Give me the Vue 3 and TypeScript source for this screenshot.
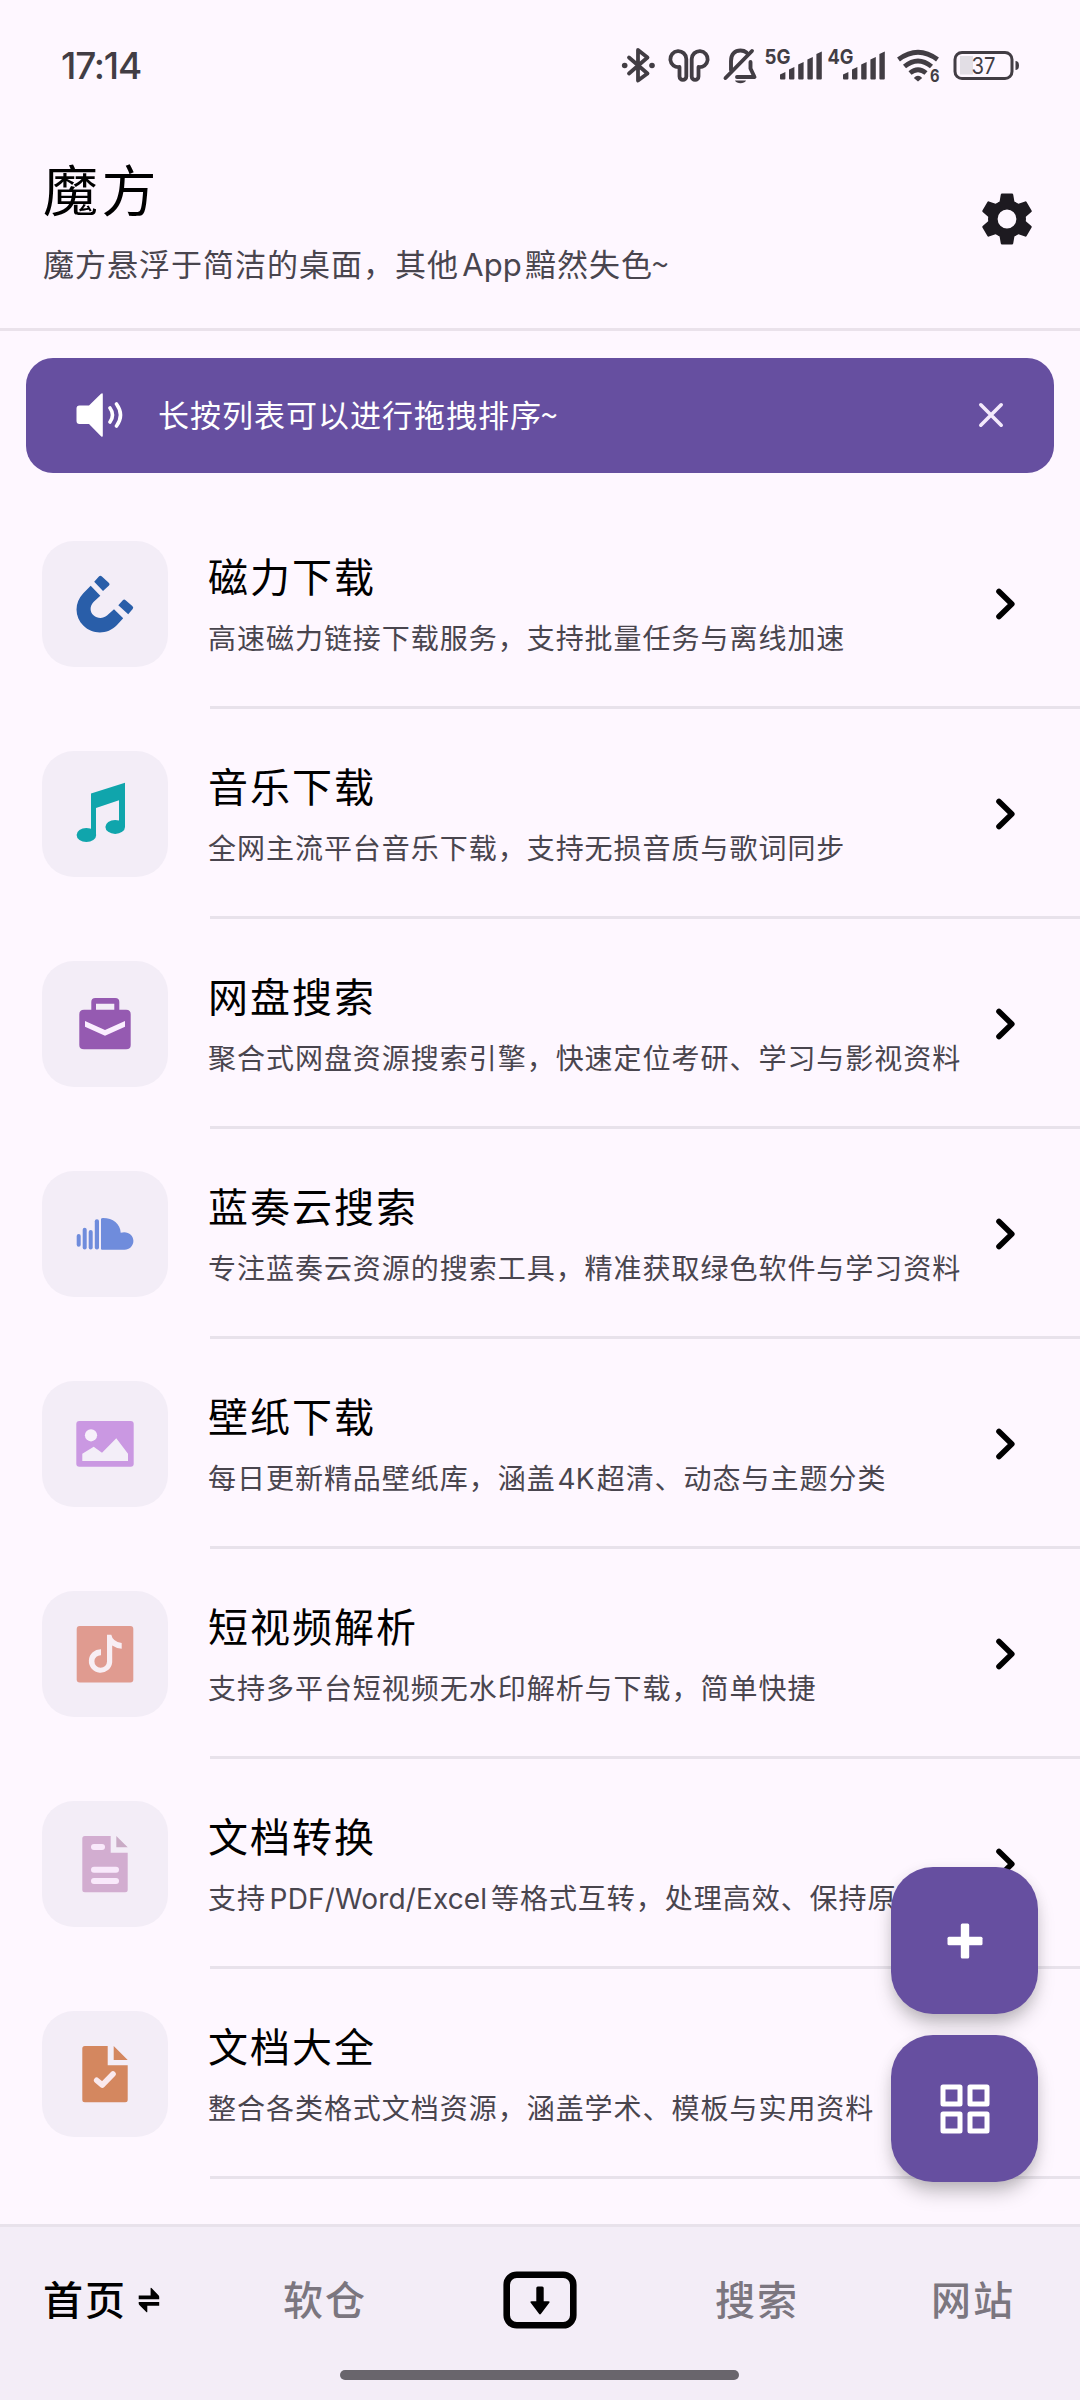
<script setup lang="ts">
interface Tool {
  icon: string
  title: string
  desc: string
}

interface Segment {
  text: string
  latin: boolean
}

const tools: Tool[] = [
  { icon: 'magnet', title: '磁力下载', desc: '高速磁力链接下载服务，支持批量任务与离线加速' },
  { icon: 'music', title: '音乐下载', desc: '全网主流平台音乐下载，支持无损音质与歌词同步' },
  { icon: 'case', title: '网盘搜索', desc: '聚合式网盘资源搜索引擎，快速定位考研、学习与影视资料' },
  { icon: 'cloud', title: '蓝奏云搜索', desc: '专注蓝奏云资源的搜索工具，精准获取绿色软件与学习资料' },
  { icon: 'image', title: '壁纸下载', desc: '每日更新精品壁纸库，涵盖4K超清、动态与主题分类' },
  { icon: 'video', title: '短视频解析', desc: '支持多平台短视频无水印解析与下载，简单快捷' },
  { icon: 'convert', title: '文档转换', desc: '支持PDF/Word/Excel等格式互转，处理高效、保持原' },
  { icon: 'docs', title: '文档大全', desc: '整合各类格式文档资源，涵盖学术、模板与实用资料' },
]

const teeth = [0, 60, 120, 180, 240, 300]
const bars = [
  { x: 0, h: 6.5 },
  { x: 9, h: 11.5 },
  { x: 18.2, h: 16.5 },
  { x: 27.4, h: 21.5 },
  { x: 36.4, h: 27 },
]

function segments(text: string): Segment[] {
  return text
    .split(/([A-Za-z0-9/]+)/)
    .filter(Boolean)
    .map((part) => ({ text: part, latin: /^[A-Za-z0-9/]+$/.test(part) }))
}
</script>

<template>
  <div class="screen">
    <div class="status">
      <span class="time">17:14</span>
      <svg class="status-icons" width="400" height="44" viewBox="620 44 400 44" fill="none" stroke="#423d44" stroke-width="4" stroke-linecap="round" stroke-linejoin="round">
        <path d="M629 57.500L647.500 73.500L638 80.500V50L647.500 57.500L629 73.500" stroke-width="3.800" />
        <g fill="#423d44" stroke="none">
          <circle cx="624.700" cy="65.500" r="2.800" />
          <circle cx="652" cy="65.500" r="2.800" />
        </g>
        <path d="M679.500 67A8 8 0 1 1 686.300 59V76.500A3.400 3.400 0 0 1 679.500 76.500ZM698.500 67A8 8 0 1 0 691.700 59V76.500A3.400 3.400 0 0 0 698.500 76.500Z" stroke-width="3.800" />
        <path d="M731 70V61C731 54 735 50.500 740.500 50.500C743 50.500 745 51.200 746.500 52.500M750.500 62V68.500L754.500 77H737M752 51L725.500 78" stroke-width="3.900" />
        <path d="M735 80.500H746C744.500 84 736.500 84 735 80.500Z" fill="#423d44" stroke="none" />
        <g fill="#423d44" stroke="none">
          <g v-for="offset in [780, 843]" :key="offset">
            <path
              v-for="bar in bars"
              :key="bar.x"
              :d="`M${offset + bar.x} ${81 - bar.h}L${offset + bar.x + 5.400} ${78.500 - bar.h}V78.500Q${offset + bar.x + 5.400} 79.500 ${offset + bar.x + 4.400} 79.500H${offset + bar.x + 1}Q${offset + bar.x} 79.500 ${offset + bar.x} 78.500Z`"
            />
          </g>
          <text x="764.500" y="64" class="net" textLength="26" lengthAdjust="spacingAndGlyphs">5G</text>
          <text x="827.500" y="64" class="net" textLength="26" lengthAdjust="spacingAndGlyphs">4G</text>
          <text x="930" y="82" class="six" textLength="9.500" lengthAdjust="spacingAndGlyphs">6</text>
        </g>
        <path d="M898.500 59.500Q918 45 937.500 59.500M904.500 66.500Q918 55.500 931.500 66.500M910 73Q918 66.500 926 73" stroke-width="4.800" stroke-linecap="butt" />
        <path d="M913.800 78Q918 73.500 922.200 78L918 81.500Z" fill="#423d44" stroke="none" />
        <path d="M960 56H973V74.500H960Z" fill="#e2dee5" stroke="none" />
        <rect x="955" y="52.500" width="57" height="26" rx="7" stroke-width="3" />
        <path d="M1015.500 61Q1019 61 1019 65.500Q1019 70 1015.500 70Z" fill="#423d44" stroke="none" />
        <text x="971.500" y="74" class="level" textLength="24" lengthAdjust="spacingAndGlyphs" fill="#423d44" stroke="none">37</text>
      </svg>
    </div>

    <header class="header">
      <div class="heading">
        <h1>魔方</h1>
        <p>魔方悬浮于简洁的桌面，其他<span class="latin app">App</span>黯然失色<span class="tilde">~</span></p>
      </div>
      <svg class="gear" width="54" height="54" viewBox="-27 -27 54 54" fill="#1d1a20">
        <circle r="13.800" fill="none" stroke="#1d1a20" stroke-width="8.800" />
        <path
          v-for="angle in teeth"
          :key="angle"
          :transform="`rotate(${angle})`"
          d="M-5 -25.500H5Q6 -25.500 6.200 -24.500L7.400 -17.500L10.500 -15.500L7 -12H-7L-10.500 -15.500L-7.400 -17.500L-6.200 -24.500Q-6 -25.500 -5 -25.500Z"
        />
      </svg>
    </header>

    <section class="banner">
      <svg class="speaker" width="48" height="46" viewBox="76 392.500 48 46" fill="#fff">
        <path d="M79.500 406H89L101 394.300Q102.800 393 102.800 395V436Q102.800 438 101 436.700L89 424.500H79.500Q76.500 424.500 76.500 421.500V409Q76.500 406 79.500 406Z" />
        <path d="M110 408.500Q115 415.500 110 422.500M116.500 404.500Q124.500 415.500 116.500 426.500" fill="none" stroke="#fff" stroke-width="3.600" stroke-linecap="round" />
      </svg>
      <span class="banner-text">长按列表可以进行拖拽排序<span class="tilde">~</span></span>
      <svg class="close" width="26" height="26" viewBox="-13 -13 26 26" stroke="#f3e9fb" stroke-width="3.600" stroke-linecap="round">
        <path d="M-10.200 -10.200L10.200 10.200M10.200 -10.200L-10.200 10.200" />
      </svg>
    </section>

    <main class="list">
      <article v-for="tool in tools" :key="tool.title" class="row">
        <div class="tile">
          <svg width="58" height="58" viewBox="0 0 58 58">
            <g v-if="tool.icon === 'magnet'" fill="#295ea9">
              <path d="M14.700 10.700L24.300 20.700L17.500 27C13.500 31.500 13.800 37 17.500 40.300C21.500 43.800 27 43.800 31 40.500L38 34.300L47.200 43.300L41 50C31.500 60 16.500 59.700 7.500 50.800C-1.700 41.500 -1.800 27.500 7.300 18.200Z" />
              <path d="M18.200 6.800L22.900 1.600Q24.300 0 25.900 1.500L33 8Q34.200 9.300 33 10.500L27 16Z" />
              <path d="M42.300 30.300L46.800 25.300Q48.100 23.900 49.600 25.200L56.300 31Q58 32.500 56.700 34L52.200 39.300Z" />
            </g>
            <g v-else-if="tool.icon === 'music'" fill="#10a5ac">
              <path d="M15 8.500L49 -2.300V42H43V15.300L20 23V50.500H15Z" />
              <ellipse cx="10.400" cy="50" rx="9.800" ry="7" />
              <ellipse cx="39.200" cy="41.900" rx="9.800" ry="7" />
            </g>
            <g v-else-if="tool.icon === 'case'" fill="#955ab1">
              <path fill-rule="evenodd" d="M8 14.700H15.300V7Q15.300 3 19.300 3H39.300Q43.300 3 43.300 7V14.700H50.200Q54.700 14.700 54.700 19.200V50Q54.700 54.300 50.200 54.300H8Q3.300 54.300 3.300 50V19.200Q3.300 14.700 8 14.700ZM20 8.700V14.700H38.300V8.700Z" />
              <path d="M9 26L29 35L49 26V31.700L29 40.700L9 31.700Z" fill="#fbeeff" />
            </g>
            <g v-else-if="tool.icon === 'cloud'" fill="#6f8cdc">
              <rect x=".7" y="29" width="4" height="12.700" rx="2" />
              <rect x="6.700" y="22.700" width="4" height="21.800" rx="2" />
              <rect x="12.700" y="25" width="4" height="19.500" rx="2" />
              <rect x="18.800" y="14.300" width="4.200" height="30.300" rx="2" />
              <path d="M25 14.200Q25 13 27 13C37 13 44.300 19 44.700 27.700C51.500 25.500 57.400 30 57.400 35.800C57.400 41 53.500 44.700 48.500 44.700H26Q25 44.700 25 43.700Z" />
            </g>
            <g v-else-if="tool.icon === 'image'">
              <rect x=".3" y="6" width="57.400" height="45.700" rx="3" fill="#ca98e2" />
              <circle cx="15" cy="20.300" r="6.100" fill="#f7f0fa" />
              <path d="M6.300 38.800L17.700 31.700L26 37.700L40.300 23.300L52 38.800V46H6.300Z" fill="#f3eef8" />
            </g>
            <g v-else-if="tool.icon === 'video'">
              <rect x=".7" y="1" width="56.600" height="56.400" rx="3" fill="#e09b90" />
              <path d="M31 9.800H35.300Q36.500 16.500 45.700 18V23.700Q40.500 23.500 36.200 20.500V37.200A11.700 11.700 0 1 1 25 24.300V30.200A6.300 6.300 0 1 0 31 36.500Z" fill="#f8eef4" />
            </g>
            <g v-else-if="tool.icon === 'convert'">
              <path d="M8.800 1H34.700V17.700H51.700V54.800Q51.700 57.300 49.200 57.300H8.800Q6.300 57.300 6.300 54.800V3.500Q6.300 1 8.800 1Z" fill="#d2add0" />
              <path d="M40.300 1L51.700 12.300H40.300Z" fill="#c9abc5" />
              <g fill="#f9e9fb">
                <rect x="15" y="9" width="14" height="6" rx="3" />
                <rect x="15" y="31.700" width="28" height="6" rx="3" />
                <rect x="15" y="43" width="28" height="6" rx="3" />
              </g>
            </g>
            <g v-else>
              <path d="M8.800 1H31.700V20.300H51.700V54.800Q51.700 57.300 49.200 57.300H8.800Q6.300 57.300 6.300 54.800V3.500Q6.300 1 8.800 1ZM37.700 1L51.700 15H37.700Z" fill="#d4875f" />
              <path d="M20.700 35.300L26.300 40L37 29" fill="none" stroke="#fae9ee" stroke-width="5.600" stroke-linecap="round" stroke-linejoin="round" />
            </g>
          </svg>
        </div>
        <div class="body">
          <div class="text">
            <h2>{{ tool.title }}</h2>
            <p><span v-for="(part, index) in segments(tool.desc)" :key="index" :class="{ latin: part.latin, short: part.latin && part.text.length === 2, long: part.latin && part.text.length > 2 }">{{ part.text }}</span></p>
          </div>
          <svg class="chevron" width="24" height="34" viewBox="-4 -17 24 34" fill="none" stroke="#000" stroke-width="5.600" stroke-linecap="round" stroke-linejoin="round">
            <path d="M0 -12.500L12.800 0L0 12.500" />
          </svg>
        </div>
      </article>
    </main>

    <div class="fabs">
      <button class="fab" type="button">
        <svg width="36" height="36" viewBox="0 0 36 36" fill="#fff">
          <rect x=".5" y="13.800" width="35" height="8.400" rx="1.500" />
          <rect x="13.800" y=".5" width="8.400" height="35" rx="1.500" />
        </svg>
      </button>
      <button class="fab" type="button">
        <svg width="50" height="50" viewBox="0 0 50 50" fill="none" stroke="#fff" stroke-width="5" stroke-linejoin="round">
          <rect x="3" y="3" width="17" height="17" />
          <rect x="30" y="3" width="17" height="17" />
          <rect x="3" y="30" width="17" height="17" />
          <rect x="30" y="30" width="17" height="17" />
        </svg>
      </button>
    </div>

    <footer class="footer">
      <nav class="tabs">
        <span class="tab active">首页
          <svg width="22" height="26" viewBox="0 0 22 26" fill="#000">
            <path d="M.7 8.600H12.600V1.300Q12.600 .2 13.500 1L20.700 8.500Q21.200 9 21.200 10V12.300H.7ZM21.200 15H.7V16.500Q.7 17.300 1.300 18L8.300 25Q9.300 25.900 9.300 24.500V18.700H21.200Z" />
          </svg>
        </span>
        <span class="tab">软仓</span>
        <span class="tab center">
          <svg width="74" height="58" viewBox="0 0 74 58">
            <rect x="3.700" y="3.700" width="66.600" height="50.600" rx="10" fill="none" stroke="#000" stroke-width="6.600" />
            <path d="M33.300 17Q33.300 15.500 34.800 15.500H39.200Q40.700 15.500 40.700 17V30.300H45.500Q47.500 30.300 46.300 31.800L38 42.800Q37 44 36 42.800L27.700 31.800Q26.500 30.300 28.500 30.300H33.300Z" />
          </svg>
        </span>
        <span class="tab">搜索</span>
        <span class="tab">网站</span>
      </nav>
      <div class="home-bar"></div>
    </footer>
  </div>
</template>

<style>
body {
  background: #fef7ff;
}
</style>

<style scoped>
.screen {
  position: relative;
  display: flex;
  flex-direction: column;
  width: 1080px;
  height: 2400px;
  overflow: hidden;
  background: #fef7ff;
  color: #000;
  font-family: "Noto Sans CJK SC", sans-serif;
}

h1,
h2,
p {
  margin: 0;
  font-weight: 400;
  white-space: nowrap;
}

.status {
  display: flex;
  justify-content: space-between;
  align-items: center;
  box-sizing: border-box;
  height: 132px;
  padding: 0 60px 0 61px;
}

.time {
  color: #423d44;
  font: 500 37px/44px Inter, sans-serif;
  letter-spacing: -1.200px;
}

.net {
  font: 700 20px Inter, sans-serif;
}

.six {
  font: 700 17px Inter, sans-serif;
}

.level {
  font: 400 23px Inter, sans-serif;
}

.header {
  display: flex;
  justify-content: space-between;
  box-sizing: border-box;
  height: 199px;
  padding: 15px 46px 0 43px;
  border-bottom: 3px solid #eae2eb;
}

h1 {
  font-size: 55px;
  line-height: 80px;
  letter-spacing: 3.500px;
}

.header p {
  height: 46px;
  margin-top: 13px;
  color: #49454e;
  font-size: 31px;
  line-height: 46px;
  letter-spacing: 1px;
}

.gear {
  margin-top: 45px;
}

.latin {
  display: inline-block;
  font-family: Inter, sans-serif;
  line-height: 1;
  text-align: center;
  letter-spacing: 0;
}

.tilde {
  margin-left: -1.500px;
}

.app {
  width: 66px;
}

.short {
  width: 41px;
}

.long {
  width: 225px;
}

.banner {
  display: flex;
  align-items: center;
  flex: none;
  box-sizing: border-box;
  height: 115px;
  margin: 27px 26px 0;
  padding: 0 50px;
  border-radius: 27px;
  background: #664fa0;
  color: #fff;
}

.banner svg {
  margin-bottom: 1px;
}

.banner-text {
  margin: 0 0 4px 34px;
  font-size: 31px;
  line-height: 46px;
  letter-spacing: 1px;
}

.close {
  margin-left: auto;
}

.list {
  flex: none;
  margin-top: 26px;
}

.row {
  display: flex;
  align-items: center;
  height: 210px;
  padding-left: 42px;
}

.tile {
  display: flex;
  align-items: center;
  justify-content: center;
  width: 126px;
  height: 126px;
  border-radius: 32px;
  background: #f3edf7;
}

.tile svg {
  overflow: visible;
}

.body {
  display: flex;
  flex: 1;
  align-items: center;
  justify-content: space-between;
  box-sizing: border-box;
  height: 210px;
  margin-left: 42px;
  padding: 3px 61px 0 0;
  border-bottom: 3px solid #e8e2eb;
}

.text {
  width: 760px;
  margin: 0 0 6px -2px;
}

h2 {
  font-size: 40px;
  line-height: 60px;
  letter-spacing: 2px;
}

.text p {
  height: 42px;
  margin-top: 11px;
  color: #49454e;
  font-size: 28px;
  line-height: 42px;
  letter-spacing: 0.970px;
}

.text .latin {
  letter-spacing: 0.150px;
}

.chevron {
  flex: none;
}

.fabs {
  position: absolute;
  top: 1867px;
  right: 42px;
  display: flex;
  flex-direction: column;
  gap: 21px;
}

.fab {
  display: flex;
  align-items: center;
  justify-content: center;
  width: 147px;
  height: 147px;
  padding: 0;
  border: 0;
  border-radius: 42px;
  background: #664fa0;
  box-shadow: 0 13px 20px -4px rgba(0, 0, 0, 0.26), 0 2px 14px rgba(0, 0, 0, 0.07);
}

.footer {
  position: absolute;
  right: 0;
  bottom: 0;
  left: 0;
  box-sizing: border-box;
  height: 176px;
  border-top: 3px solid #e8e2eb;
  background: #f3edf7;
}

.tabs {
  display: grid;
  grid-template-columns: 240px 220px 212px 216px 1fr;
  align-items: center;
  height: 142px;
  padding-left: 43px;
}

.tab {
  display: flex;
  align-items: center;
  color: #7b767f;
  font-size: 40px;
  font-weight: 500;
  line-height: 60px;
  letter-spacing: 2px;
}

.tab.active {
  color: #000;
}

.tab.active svg {
  margin: 4px 0 0 11px;
}

.tab.center svg {
  margin-top: 3px;
}

.home-bar {
  width: 399px;
  height: 10px;
  margin: 1px 0 0 340px;
  border-radius: 5px;
  background: #69656c;
}
</style>
